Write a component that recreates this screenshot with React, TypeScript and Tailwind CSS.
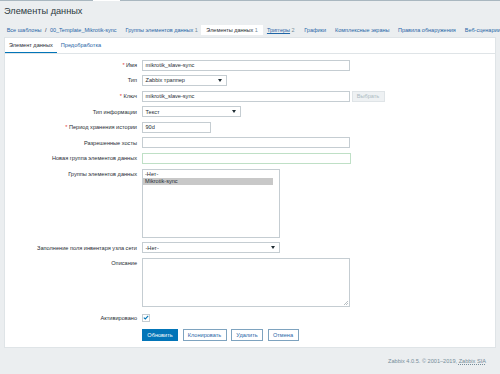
import React from 'react';

const Label = ({ children, required, top }: { children: React.ReactNode; required?: boolean; top?: boolean }) => (
  <div className={`flex h-[11px] items-center justify-end whitespace-nowrap text-[5.6px] text-[#1f2c33] ${top ? 'self-start' : ''}`}>
    {required && <span className="mr-[1.5px] text-[#e33734]">*</span>}
    {children}
  </div>
);

const Field = ({ className, children }: { className: string; children?: React.ReactNode }) => (
  <div className={`flex h-[11px] items-center border border-[#c5cdd2] bg-white px-[2.5px] text-[5.6px] text-[#1f2c33] ${className}`}>
    {children}
  </div>
);

const Select = ({ className, value }: { className: string; value: string }) => (
  <Field className={`justify-between ${className}`}>
    <span>{value}</span>
    <svg width="4" height="3" viewBox="0 0 4 3" className="mr-[2px]">
      <path d="M0 0h4L2 3z" fill="#1f2c33" />
    </svg>
  </Field>
);

const Crumb = ({ children, className = '' }: { children: React.ReactNode; className?: string }) => (
  <span className={`text-[#1f65a6] ${className}`}>{children}</span>
);

export default function App() {
  return (
    <div className="flex h-[374px] w-[500px] flex-col overflow-hidden bg-[#ebeef0] font-['Liberation_Sans',Arial,sans-serif]">
      {/* strip of the top menu */}
      <div className="flex h-px bg-[#a9b7c0]">
        <div className="ml-[93px] w-[27px] bg-white" />
      </div>

      <div className="flex h-[22px] items-center pl-[4px] text-[9.2px] text-[#2b3a42]">Элементы данных</div>

      {/* breadcrumbs + item navigation */}
      <div className="flex h-[14px] items-center whitespace-nowrap pl-[6.7px] text-[5.5px]">
        <Crumb>Все шаблоны</Crumb>
        <span className="mx-[3.5px] text-[#1f2c33]">/</span>
        <Crumb>00_Template_Mikrotik-sync</Crumb>
        <Crumb className="ml-[9px]">
          Группы элементов данных <span className="text-[#768d99]">1</span>
        </Crumb>
        <div className="ml-[3.5px] flex h-[10px] items-center bg-white px-[5px]">
          <span className="text-[#1f2c33]">
            Элементы данных <span className="text-[#768d99]">1</span>
          </span>
        </div>
        <Crumb className="ml-[4px]">
          <span className="underline">Триггеры</span> <span className="text-[#768d99]">2</span>
        </Crumb>
        <Crumb className="ml-[9.5px]">Графики</Crumb>
        <Crumb className="ml-[9px]">Комплексные экраны</Crumb>
        <Crumb className="ml-[8.5px]">Правила обнаружения</Crumb>
        <Crumb className="ml-[9px]">Веб-сценарии</Crumb>
      </div>

      {/* main panel */}
      <div className="mx-[4px] border border-[#dfe4e7] bg-white pb-[6px]">
        <div className="flex h-[16px] items-stretch border-b border-[#dfe4e7] text-[5.6px]">
          <div className="flex items-center border-b-[1.5px] border-[#0275b8] px-[4px] text-[#1f2c33]">Элемент данных</div>
          <div className="flex items-center px-[4px] text-[#1f65a6]">Предобработка</div>
        </div>

        <div className="grid grid-cols-[132px_1fr] items-center gap-x-[5px] gap-y-[4.6px] pt-[5.5px]">
          <Label required>Имя</Label>
          <Field className="w-[208px]">mikrotik_slave-sync</Field>

          <Label>Тип</Label>
          <Select className="w-[85px]" value="Zabbix траппер" />

          <Label required>Ключ</Label>
          <div className="flex items-center gap-[1.5px]">
            <Field className="w-[208px]">mikrotik_slave-sync</Field>
            <div className="flex h-[11px] w-[33px] items-center justify-center border border-[#dfe4e7] bg-[#eef1f3] text-[5.6px] text-[#acbbc2]">
              Выбрать
            </div>
          </div>

          <Label>Тип информации</Label>
          <Select className="w-[99px]" value="Текст" />

          <Label required>Период хранения истории</Label>
          <Field className="w-[69px]">90d</Field>

          <Label>Разрешенные хосты</Label>
          <Field className="w-[208px]" />

          <Label>Новая группа элементов данных</Label>
          <div className="h-[11px] w-[209px] border-[1.5px] border-[#bfe0c6] bg-white" />

          <Label top>Группы элементов данных</Label>
          <div className="h-[69px] w-[138px] border border-[#c5cdd2] bg-white pt-[1.5px] text-[5.6px] text-[#1f2c33]">
            <div className="flex h-[7px] items-center pl-[2px]">-Нет-</div>
            <div className="mr-[6px] flex h-[7px] items-center bg-[#c8c8c8] pl-[2px]">Mikrotik-sync</div>
          </div>

          <Label>Заполнение поля инвентаря узла сети</Label>
          <Select className="w-[138px]" value="-Нет-" />

          <Label top>Описание</Label>
          <div className="relative h-[49px] w-[208px] border border-[#c5cdd2] bg-white">
            <svg width="4" height="4" viewBox="0 0 4 4" className="absolute bottom-[1px] right-[1px]">
              <path d="M4 0L0 4M4 2L2 4" stroke="#8a959c" strokeWidth="0.6" />
            </svg>
          </div>

          <Label>Активировано</Label>
          <div className="flex h-[13px] items-center">
            <div className="flex h-[8px] w-[8px] items-center justify-center border border-[#c5cdd2] bg-white">
              <svg width="6" height="5" viewBox="0 0 6 5">
                <path d="M0.8 2.6L2.3 4L5.2 0.9" fill="none" stroke="#0275b8" strokeWidth="1.1" />
              </svg>
            </div>
          </div>

          <div className="col-start-2 flex h-[12px] gap-[4.5px] text-[5.6px]">
            <div className="flex w-[36px] items-center justify-center border border-[#0275b8] bg-[#0275b8] text-white">Обновить</div>
            <div className="flex w-[44px] items-center justify-center border border-[#7ea3bf] bg-white text-[#1f65a6]">Клонировать</div>
            <div className="flex w-[32px] items-center justify-center border border-[#7ea3bf] bg-white text-[#1f65a6]">Удалить</div>
            <div className="flex w-[31px] items-center justify-center border border-[#7ea3bf] bg-white text-[#1f65a6]">Отмена</div>
          </div>
        </div>
      </div>

      <div className="flex flex-1 items-center justify-end pr-[14px] text-[5.6px] text-[#768d99]">
        Zabbix 4.0.5. © 2001–2019, <span className="ml-[1.5px] underline decoration-dotted">Zabbix SIA</span>
      </div>
    </div>
  );
}
